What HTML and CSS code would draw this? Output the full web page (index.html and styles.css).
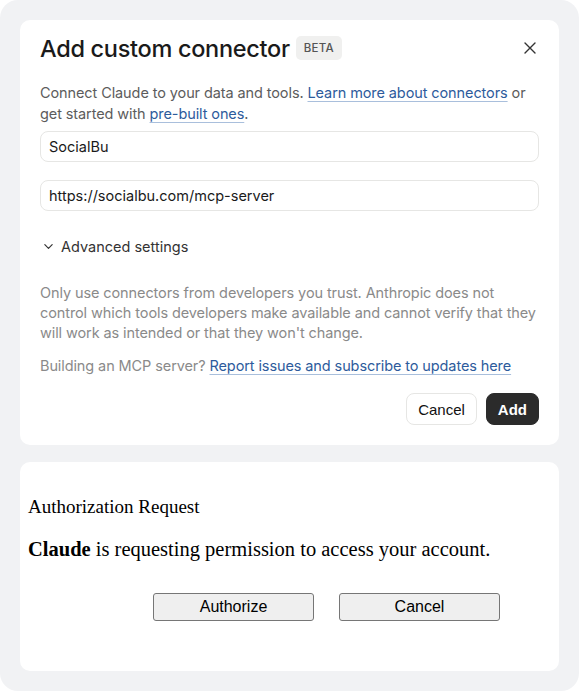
FILE: index.html
```html
<!DOCTYPE html>
<html lang="en">
<head>
  <meta charset="UTF-8">
  <meta name="viewport" content="width=device-width, initial-scale=1">
  <title>Add custom connector</title>
  <link rel="stylesheet" href="styles.css">
</head>
<body>
  <div class="frame">
    <section class="card">
      <header class="card-head">
        <h1>Add custom connector</h1>
        <span class="badge">BETA</span>
        <button class="close" type="button" aria-label="Close">
          <svg width="14" height="14" viewBox="0 0 14 14" fill="none" stroke="#333" stroke-width="1.4" stroke-linecap="round">
            <path d="M2 2 L12 12 M12 2 L2 12"/>
          </svg>
        </button>
      </header>

      <p class="intro">Connect Claude to your data and tools. <a href="#">Learn more about connectors</a> or get started with <a href="#">pre-built ones</a>.</p>

      <input class="field" type="text" value="SocialBu">
      <input class="field field-url" type="text" value="https://socialbu.com/mcp-server">

      <div class="advanced">
        <svg width="11" height="11" viewBox="0 0 12 12" fill="none" stroke="#333" stroke-width="1.3" stroke-linecap="round" stroke-linejoin="round">
          <path d="M2 4 L6 8 L10 4"/>
        </svg>
        <span>Advanced settings</span>
      </div>

      <p class="note">Only use connectors from developers you trust. Anthropic does not control which tools developers make available and cannot verify that they will work as intended or that they won't change.</p>
      <p class="note note-link">Building an MCP server? <a href="#">Report issues and subscribe to updates here</a></p>

      <div class="actions">
        <button class="btn btn-cancel" type="button">Cancel</button>
        <button class="btn btn-add" type="button">Add</button>
      </div>
    </section>

    <section class="card auth">
      <p class="auth-title">Authorization Request</p>
      <p class="auth-text"><b>Claude</b> is requesting permission to access your account.</p>
      <div class="auth-actions">
        <button class="native" type="button">Authorize</button>
        <button class="native" type="button">Cancel</button>
      </div>
    </section>
  </div>
</body>
</html>
```

FILE: styles.css
```css
:root {
  --frame: #f1f2f4;
  --text: #1a1a1a;
  --muted: #5c5c5c;
  --faint: #8a8a8a;
  --link: #2d5b9c;
  --border: #e6e6e4;
  --radius: 10px;
  font-family: 'Inter', 'Noto Sans', sans-serif;
  color: var(--text);
}

* {
  box-sizing: border-box;
}

body {
  margin: 0;
  background: #fff;
}

.frame {
  background: var(--frame);
  border-radius: 18px;
  min-height: 691px;
  padding: 20px;
  display: flex;
  flex-direction: column;
  gap: 17px;
}

.card {
  background: #fff;
  border-radius: var(--radius);
  padding: 13px 20px 20px;
}

.card-head {
  display: flex;
  align-items: center;
  height: 30px;
}

h1 {
  margin: 0;
  font-size: 23.5px;
  font-weight: 500;
  letter-spacing: -0.3px;
}

.badge {
  margin-left: 6px;
  background: #f0f0ef;
  color: #555;
  font-size: 11.5px;
  font-weight: 500;
  letter-spacing: 0.3px;
  padding: 5px 8px;
  border-radius: 5px;
}

.close {
  margin-left: auto;
  margin-right: 2px;
  background: none;
  border: none;
  padding: 0;
  display: flex;
}

.intro {
  margin: 19px 0 7px;
  font-size: 14.5px;
  line-height: 21px;
  color: var(--muted);
  letter-spacing: -0.1px;
}

a {
  color: var(--link);
  text-decoration: underline;
  text-decoration-color: #a9bfdc;
  text-underline-offset: 3px;
}

.field {
  display: block;
  width: 100%;
  height: 31px;
  border: 1px solid var(--border);
  border-radius: 8px;
  padding: 0 8px;
  font-family: inherit;
  font-size: 14.5px;
  color: var(--text);
  background: #fff;
}

.field-url {
  margin-top: 18px;
}

.advanced {
  display: flex;
  align-items: center;
  gap: 7px;
  margin: 27px 0 0 3px;
  font-size: 14.5px;
  color: #333;
}

.note {
  margin: 28px 0 0;
  font-size: 14.5px;
  line-height: 20px;
  color: var(--faint);
  letter-spacing: -0.1px;
}

.note-link {
  margin-top: 13px;
}

.actions {
  display: flex;
  justify-content: flex-end;
  gap: 9px;
  margin-top: 17px;
}

.btn {
  height: 32px;
  border-radius: 8px;
  font-family: 'Liberation Sans', Arial, sans-serif;
  font-size: 15px;
  padding: 0 11px;
}

.btn-cancel {
  background: #fff;
  border: 1px solid var(--border);
  color: #111;
}

.btn-add {
  background: #2b2b2b;
  border: 1px solid #2b2b2b;
  color: #fff;
  font-weight: 700;
}

.auth {
  padding: 34px 8px 8px;
  flex: 1;
  font-family: 'Liberation Serif', 'Times New Roman', serif;
  color: #000;
}

.auth-title {
  margin: 0;
  font-size: 19px;
}

.auth-text {
  margin: 20px 0 0;
  font-size: 20.5px;
}

.auth-actions {
  display: flex;
  gap: 25px;
  margin: 32px 0 0 125px;
}

.native {
  width: 161px;
  height: 28px;
  background: #efefef;
  border: 1px solid #767676;
  border-radius: 3px;
  font-family: 'Liberation Sans', Arial, sans-serif;
  font-size: 16px;
  color: #000;
  padding: 0;
}
```
